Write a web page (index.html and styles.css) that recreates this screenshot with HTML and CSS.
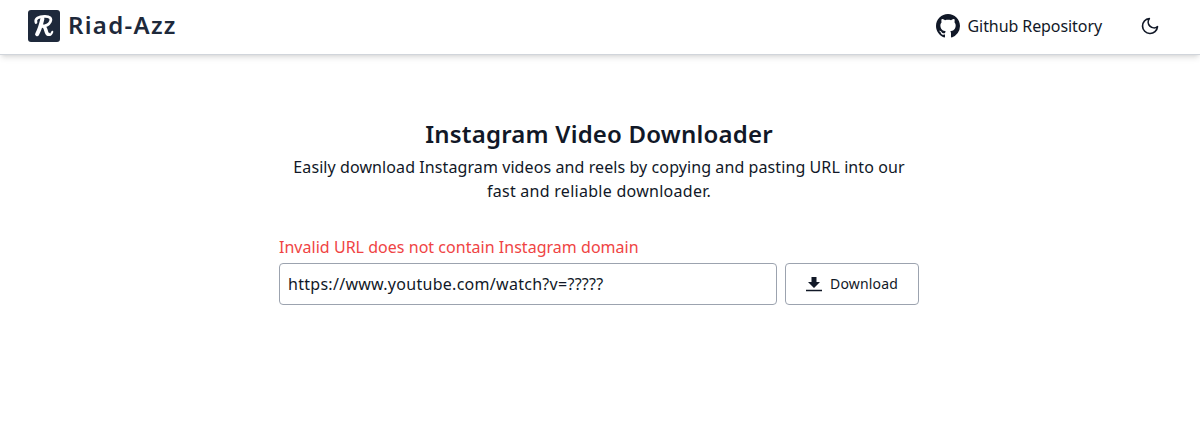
FILE: index.html
```html
<!DOCTYPE html>
<html lang="en">
<head>
<meta charset="utf-8">
<title>Instagram Video Downloader</title>
<link rel="stylesheet" href="styles.css">
</head>
<body>
<header class="navbar">
  <a class="brand">
    <svg class="logo" viewBox="0 0 32 32" aria-hidden="true">
      <rect width="32" height="32" rx="3" fill="#1e293b"/>
      <g fill="none" stroke="#fff" stroke-linecap="round" stroke-linejoin="round">
        <path stroke-width="4" d="M14.400 8.800C13.200 14 11.500 20 9.100 24.200"/>
        <path stroke-width="2.700" d="M8 12.500C6.600 8.500 11 6.400 16.500 6.300C22 6.100 24 8.500 22.300 11.800C21 14.400 17.500 16 14 16.200"/>
        <path stroke-width="3.600" d="M15.800 16.600C18.400 17.500 17.600 24 20.300 24.300"/>
        <path stroke-width="2" d="M20.300 25C22.300 25.300 23.700 23.500 24.300 21.800"/>
      </g>
    </svg>
    <span class="brand-name">Riad-Azz</span>
  </a>
  <nav class="links">
    <a class="repo">
      <svg class="github" viewBox="0 0 16 16" aria-hidden="true"><path fill="currentColor" fill-rule="evenodd" d="M8 0C3.58 0 0 3.58 0 8c0 3.54 2.290 6.530 5.470 7.590.4.070.55-.17.55-.38 0-.19-.01-.82-.01-1.490-2.010.37-2.530-.49-2.690-.94-.09-.23-.48-.94-.82-1.130-.28-.15-.68-.52-.01-.53.63-.01 1.080.58 1.230.82.72 1.210 1.870.87 2.330.66.07-.52.28-.87.51-1.070-1.780-.2-3.640-.89-3.640-3.950 0-.87.31-1.590.82-2.150-.08-.2-.36-1.020.08-2.120 0 0 .67-.21 2.200.82.64-.18 1.320-.27 2-.27s1.360.09 2 .27c1.530-1.040 2.200-.82 2.200-.82.44 1.100.16 1.920.08 2.120.51.56.82 1.270.82 2.150 0 3.070-1.870 3.750-3.650 3.950.29.25.54.73.54 1.480 0 1.070-.01 1.930-.01 2.200 0 .21.15.46.55.38A8.010 8.010 0 0016 8c0-4.420-3.580-8-8-8z"/></svg>
      <span class="repo-label">Github Repository</span>
    </a>
    <svg class="moon" viewBox="0 0 24 24" aria-hidden="true"><path fill="none" stroke="currentColor" stroke-width="2" stroke-linecap="round" stroke-linejoin="round" d="M21 12.790A9 9 0 1 1 11.210 3A7 7 0 0 0 21 12.790z"/></svg>
  </nav>
</header>
<main class="content">
  <h1 class="title">Instagram Video Downloader</h1>
  <p class="intro"><span class="line-one">Easily download Instagram videos and reels by copying and pasting URL into our</span><br><span class="line-two">fast and reliable downloader.</span></p>
  <form class="form">
    <div class="error"><span class="error-text">Invalid URL does not contain Instagram domain</span></div>
    <div class="row">
      <input class="url" type="text" value="https://www.youtube.com/watch?v=?????" aria-label="Video URL">
      <button class="download" type="button">
        <svg class="arrow" viewBox="0 0 16 16" aria-hidden="true"><path fill="currentColor" d="M5.500 1h5v5H14L8 12 2 6h3.500zM0 13.800h16v1.500H0z"/></svg>
        <span class="download-label">Download</span>
      </button>
    </div>
  </form>
</main>
</body>
</html>
```
FILE: styles.css
```css
* { box-sizing: border-box; }
body {
  margin: 0;
  background: #fff;
  color: #111827;
  font: 16px/24px "Noto Sans", sans-serif;
}
.navbar {
  display: flex;
  justify-content: space-between;
  align-items: center;
  height: 55px;
  padding: 0 40px 3px 28px;
  border-bottom: 1px solid #d1d5db;
  box-shadow: 0 4px 6px -1px rgba(0, 0, 0, .1), 0 2px 4px -2px rgba(0, 0, 0, .1);
}
.brand, .repo, .links { display: flex; align-items: center; }
.brand { gap: 8px; color: #1e293b; }
.logo { width: 32px; height: 32px; }
.brand-name { padding-bottom: 1px; font-size: 24px; line-height: 32px; font-weight: 600; letter-spacing: 1.3px; }
.links { gap: 38px; }
.repo { gap: 8px; }
.github { width: 24px; height: 24px; }
.repo-label { letter-spacing: -.08px; }
.moon { width: 20px; height: 20px; }
.content { width: 640px; margin: 63px auto 0 279px; }
.title {
  margin: 0;
  text-align: center;
  font-size: 24px;
  line-height: 32px;
  font-weight: 600;
  letter-spacing: .2px;
}
.intro { margin: 5px 0 0; text-align: center; white-space: nowrap; }
.line-one { letter-spacing: .09px; }
.line-two { letter-spacing: .27px; }
.form { margin: 32px 0 0; }
.error { color: #ef4444; letter-spacing: .03px; }
.row { display: flex; gap: 8px; margin-top: 4px; }
.url, .download {
  height: 42px;
  border: 1px solid #9ca3af;
  border-radius: 4px;
  background: #fff;
  color: inherit;
  font: inherit;
}
.url { width: 498px; padding: 8px; outline: none; letter-spacing: .28px; }
.download {
  display: flex;
  align-items: center;
  justify-content: center;
  gap: 8px;
  width: 134px;
  padding: 0;
  font-size: 14px;
  letter-spacing: .17px;
}
.arrow { width: 16px; height: 16px; }
```
